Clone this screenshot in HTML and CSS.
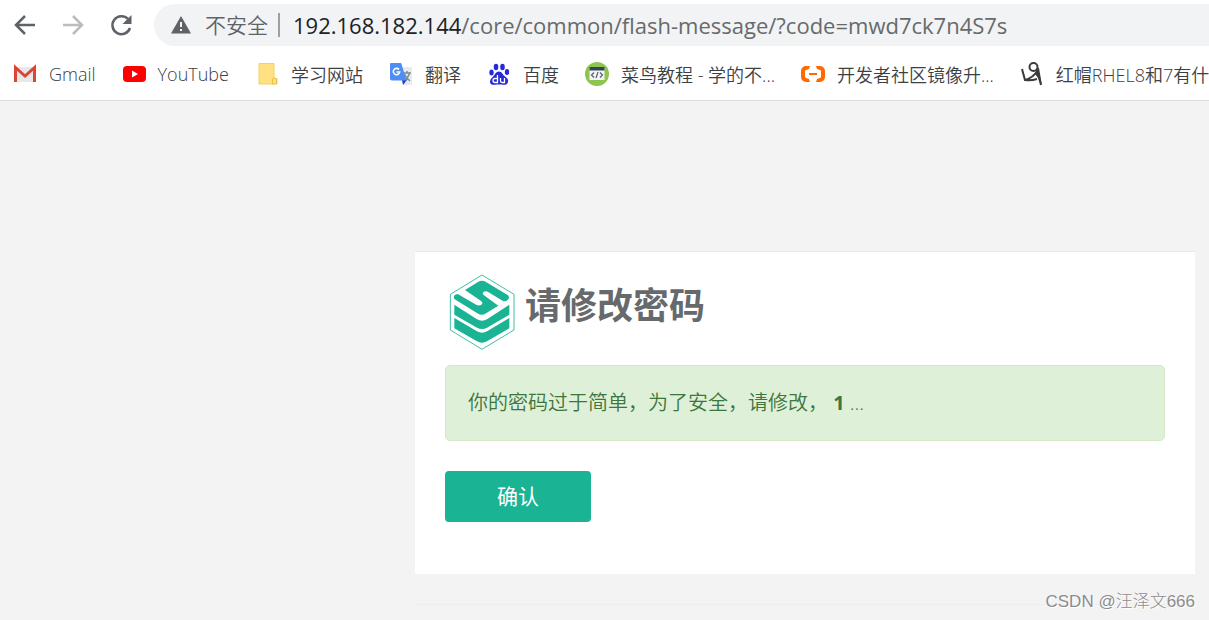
FILE: index.html
```html
<!DOCTYPE html>
<html lang="zh-CN">

<head>
    <meta charset="UTF-8">
    <meta name="viewport" content="width=device-width, initial-scale=1.0">
    <title>请修改密码</title>
    <link rel="stylesheet" href="styles.css">
</head>

<body>
    <header class="browser">
        <div class="toolbar">
            <button class="nav-btn" type="button" aria-label="后退">
                <svg width="24" height="24" viewBox="0 0 24 24"><path d="M22 12H4M12 3L3 12l9 9" /></svg>
            </button>
            <button class="nav-btn" type="button" aria-label="前进" disabled>
                <svg width="24" height="24" viewBox="0 0 24 24"><path d="M2 12h18M12 3l9 9-9 9" /></svg>
            </button>
            <button class="nav-btn" type="button" aria-label="刷新">
                <svg width="24" height="24" viewBox="0 0 24 24">
                    <path d="M19 6a9 9 0 1 0 2 9" />
                    <path class="solid" d="M22.500 2v9h-9z" />
                </svg>
            </button>
            <div class="address">
                <svg class="warn" width="20" height="18" viewBox="0 0 20 18">
                    <path d="M10 0l10 17.500H0z" fill="#5f6368" />
                    <path d="M9 6h2v5H9zM9 13h2v2H9z" fill="#f1f3f4" />
                </svg>
                <span class="insecure">不安全</span>
                <div class="url" role="textbox" aria-label="地址" contenteditable="true" spellcheck="false"><span class="host">192.168.182.144</span>/core/common/flash-message/?code=mwd7ck7n4S7s</div>
            </div>
        </div>
        <nav class="bookmarks">
            <a href="#">
                <svg width="24" height="24" viewBox="0 0 24 24">
                    <path d="M2 5h20v15H2z" fill="#e8e8e8" />
                    <path d="M2.500 20V5.500L12 14l9.500-8.500V20" fill="none" stroke="#db4437" stroke-width="3" />
                </svg>
                Gmail
            </a>
            <a href="#">
                <svg width="24" height="24" viewBox="0 0 24 24">
                    <rect x="1" y="4" width="23" height="16" rx="4" fill="#f00" />
                    <path d="M10 8.500v7l6-3.500z" fill="#fff" />
                </svg>
                YouTube
            </a>
            <a href="#">
                <svg width="24" height="24" viewBox="0 0 24 24">
                    <path d="M4 1.500h15v15h3v5.500H4z" fill="#ffe082" stroke="#f2d15c" />
                    <path d="M17.500 22v-4a2 2 0 0 1 4 0v2a2 2 0 0 1-2 2z" fill="#ffe082" stroke="#e8c03c" />
                </svg>
                学习网站
            </a>
            <a href="#">
                <svg width="24" height="24" viewBox="0 0 24 24">
                    <path d="M9 5h13a1 1 0 0 1 1 1v16a1 1 0 0 1-1 1h-8z" fill="#e8eaed" />
                    <path d="M14 11h8M18 9v2M20.500 11c-1 4-3 6-6 8M15.500 12c1 3 3 5 5.500 7" fill="none" stroke="#7b8f96" stroke-width="1.500" />
                    <path d="M13 18h5l-4 5z" fill="#2a3fc4" />
                    <path d="M2 1h9.500a1 1 0 0 1 1 1l5 16.500H3a2 2 0 0 1-2-2V2a1 1 0 0 1 1-1z" fill="#4f8df5" />
                    <path d="M10 7.500a3.200 3.200 0 1 0 .7 2.500H7.500" fill="none" stroke="#fff" stroke-width="1.600" />
                </svg>
                翻译
            </a>
            <a href="#">
                <svg width="24" height="24" viewBox="0 0 24 24" fill="#2529d8">
                    <ellipse cx="4.500" cy="10.500" rx="2.200" ry="3" />
                    <ellipse cx="9" cy="5" rx="2.300" ry="3.200" />
                    <ellipse cx="15.500" cy="5" rx="2.300" ry="3.200" />
                    <ellipse cx="20" cy="10" rx="2.200" ry="3" />
                    <path d="M12 9.500c3 0 3.500 3 6 5s3.500 3 3 5.500-3 3-5 2.700-6-.3-8 0-5 0-5-3c0-2.500 1.500-3.500 3-5s3-5.200 6-5.200z" />
                    <path d="M10.500 13v7.500H8a2 2 0 0 1 0-4h2.500M13.500 16v3q0 1.500 1.500 1.500h2.500V16" fill="none" stroke="#fff" stroke-width="1.300" />
                </svg>
                百度
            </a>
            <a href="#">
                <svg width="24" height="24" viewBox="0 0 24 24">
                    <circle cx="12" cy="12" r="12" fill="#8ec44f" />
                    <path d="M4.500 6h15v12h-15z" fill="#f4f4f4" />
                    <path d="M4.500 5h15v3.500h-15z" fill="#30475a" />
                    <path d="M9 10.500L6.500 13 9 15.500M15 10.500l2.500 2.500-2.500 2.500M13 10l-2 6" fill="none" stroke="#52616b" stroke-width="1.200" />
                </svg>
                菜鸟教程 - 学的不...
            </a>
            <a href="#">
                <svg width="24" height="24" viewBox="0 0 24 24" fill="#ff6a00">
                    <path d="M9 4H5a5 5 0 0 0-5 5v6a5 5 0 0 0 5 5h4l-1-3-3-1q-1-.3-1-1.500v-5Q4 8.300 5 8l3-1zM15 4h4a5 5 0 0 1 5 5v6a5 5 0 0 1-5 5h-4l1-3 3-1q1-.3 1-1.500v-5Q20 8.300 19 8l-3-1zM8 11h8v2H8z" />
                </svg>
                开发者社区镜像升...
            </a>
            <a href="#">
                <svg width="24" height="24" viewBox="0 0 24 24" fill="none" stroke="#3c3c3c" stroke-width="2">
                    <circle cx="13.500" cy="5" r="4" />
                    <path d="M2 7l3 11q6 1 12-1M5 18q8-2 13-10M17 8l4 15" />
                    <path d="M18 6l1 0 3 17-4-7-3-4z" fill="#3c3c3c" stroke="none" />
                </svg>
                红帽RHEL8和7有什
            </a>
        </nav>
    </header>

    <main class="page">
        <section class="card">
            <div class="heading">
                <svg width="66" height="76" viewBox="27 27 198 228">
                    <path d="M126 30l96 58v107l-96 58-95-58V88z" fill="#fff" stroke="#1ab394" stroke-width="2.500" />
                    <g fill="#1ab394">
                        <path d="M114 51q12-8 24 0l66 40q8 9-5 17-5 2-10 0l-46-28q-12-4-15 5 0 3 4 6l43 31-37 23q-12 9-26 0L44 103q-8-13 9-16l57 33q12 4 17-4 1-5-4-8L75 75z" />
                        <path d="M43 119l68 44q15 8 30 0l67-44v30l-67 39q-15 8-30 0l-68-39z" />
                        <path d="M43 159l68 40q15 8 30 0l67-40v31l-67 39q-15 8-30 0l-68-39z" />
                    </g>
                </svg>
                <h1>请修改密码</h1>
            </div>
            <p class="alert">你的密码过于简单，为了安全，请修改， <b>1</b> ...</p>
            <button class="confirm" type="button">确认</button>
        </section>
        <hr>
        <div class="watermark">CSDN @汪泽文666</div>
    </main>
</body>

</html>
```

FILE: styles.css
```css
* {
    box-sizing: border-box;
}

body {
    margin: 0;
    min-height: 100vh;
    overflow-x: hidden;
    background-color: #f3f3f4;
    font-family: "Open Sans", "Noto Sans CJK SC", sans-serif;
    color: #676a6c;
}

.browser {
    overflow: hidden;
    background-color: #fff;
    border-bottom: 1px solid #dadce0;
}

.toolbar {
    display: flex;
    align-items: center;
    padding: 4px 0 0 13px;
}

.nav-btn {
    width: 24px;
    height: 24px;
    margin-right: 24px;
    padding: 0;
    border: none;
    background: none;
}

.nav-btn svg {
    display: block;
    fill: none;
    stroke: #5f6368;
    stroke-width: 2.5;
}

.nav-btn:disabled svg {
    stroke: #babcbe;
}

.nav-btn .solid {
    fill: #5f6368;
    stroke: none;
}

.address {
    display: flex;
    flex: 1;
    align-items: center;
    height: 42px;
    margin-left: -3px;
    padding-left: 17px;
    border-radius: 21px 0 0 21px;
    background-color: #f1f3f4;
    font-size: 22px;
    line-height: 24px;
    white-space: nowrap;
}

.insecure {
    margin-left: 14px;
    padding-right: 10px;
    border-right: 2px solid #9aa0a6;
    font-size: 21px;
    font-weight: 350;
    color: #5f6368;
}

.url {
    margin-left: 13px;
    font-weight: 380;
    outline: none;
}

.host {
    color: #202124;
}

.bookmarks {
    display: flex;
    gap: 26px;
    height: 54px;
    padding: 2px 0 0 13px;
    font-size: 18px;
    font-weight: 350;
}

.bookmarks a {
    display: flex;
    flex: none;
    align-items: center;
    gap: 12px;
    color: #3c4043;
    text-decoration: none;
    white-space: nowrap;
}

.page {
    padding: 150px 14px 0;
}

.card {
    max-width: 780px;
    margin-left: auto;
    padding: 22px 30px 52px;
    border-top: 1px solid #e7eaec;
    background-color: #fff;
}

.heading {
    display: flex;
    gap: 10px;
    padding-left: 4px;
}

h1 {
    margin: 5px 0 0;
    font-size: 36px;
    line-height: 54px;
}

.alert {
    margin: 15px 0 30px;
    padding: 22px;
    border: 1px solid #d6e9c6;
    border-radius: 5px;
    background-color: #dff0d8;
    font-size: 20px;
    font-weight: 350;
    line-height: 30px;
    color: #3c763d;
}

.alert b {
    font-weight: 700;
}

.confirm {
    display: block;
    width: 146px;
    height: 51px;
    padding: 0 0 4px;
    border: none;
    border-radius: 4px;
    background-color: #1ab394;
    font-family: inherit;
    font-size: 21px;
    color: #fff;
    cursor: pointer;
}

hr {
    max-width: 780px;
    margin: 30px 0 0 auto;
    border: none;
    border-top: 1px solid #eee;
}

.watermark {
    position: absolute;
    right: 14px;
    bottom: 6px;
    font-family: "Liberation Sans", "Noto Sans CJK SC", sans-serif;
    font-size: 17px;
    font-weight: 300;
    line-height: 24px;
    color: #8c8c8c;
    text-shadow: 1px 1px 0 #fff;
}
```
